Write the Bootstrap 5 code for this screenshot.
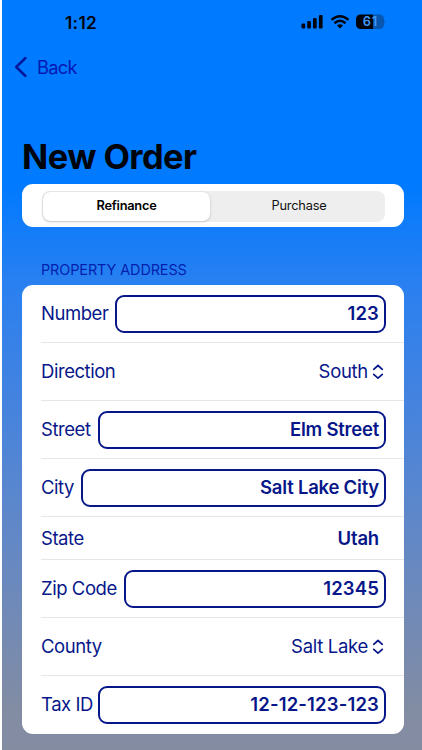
<!DOCTYPE html>
<html lang="en">
<head>
<meta charset="utf-8">
<meta name="viewport" content="width=device-width, initial-scale=1">
<title>New Order</title>
<link href="https://cdn.jsdelivr.net/npm/bootstrap@5.3.0/dist/css/bootstrap.min.css" rel="stylesheet">
<style>
:root { --navy: #07178a; }
html, body { height: 750px; overflow: hidden; }
body { font-family: Inter, "Liberation Sans", sans-serif; background: #fff; line-height: 1; }
.screen { height: 750px; margin-left: 2px; padding: 0 18px 0 20px;
  background: linear-gradient(180deg, #007aff 0, #007aff 185px, #2a80f0 285px, #4483df 400px, #5d87cb 510px, #728ab6 620px, #828ca3 710px, #848ca2 750px); }
.statusbar { height: 45px; padding: 0 18px 0 43px; color: #00040c; }
.clock { font-size: 17.3px; font-weight: 600; letter-spacing: .3px; }
.backlink { height: 44px; margin-left: -8px; font-size: 18.3px; letter-spacing: -.7px; color: #0419b4; }
.backtext { margin-left: 9px; }
.bigtitle { height: 95px; padding-top: 50px; margin: 0; font-size: 34.4px; font-weight: 700; letter-spacing: -.55px; line-height: 35px; color: #00040c; white-space: nowrap; }
.panel { background: #fff; border-radius: 11px; }
.pick { height: 43px; padding: 7px 19px 5px 20px; }
.track { background: #eeeeef; border-radius: 8px; font-size: 12.8px; letter-spacing: -.2px; color: #111; }
.seg-on { width: 167px; background: #fff; border-radius: 7px; margin: 1px; box-shadow: 0 1px 3px rgba(0,0,0,.16), 0 0 1px rgba(0,0,0,.16); font-weight: 600; letter-spacing: -.25px; color: #000; }
.seg-off { padding-left: 2px; }
.caption-line { height: 58px; padding: 36px 0 0 19px; font-size: 14.4px; letter-spacing: -.08px; line-height: 14px; color: #041fae; }
.fields { color: var(--navy); font-size: 18.5px; padding-left: 19px; overflow: hidden; }
.field { height: 58px; padding-right: 18px; border-bottom: 1px solid #e6e6e9; letter-spacing: -.45px; white-space: nowrap; }
.field:last-child { border-bottom-color: transparent; }
.field.short { height: 43px; padding-right: 25px; }
.lbl { flex: none; }
.entry { height: 38px; border: 2px solid var(--navy); border-radius: 9px; padding: 0 5px; font-weight: 600; letter-spacing: -.22px; }
.digits { letter-spacing: .15px; }
.w-number { width: 271px; } .w-street { width: 288px; } .w-city { width: 305px; } .w-zip { width: 262px; }
.val { font-weight: 600; letter-spacing: -.2px; }
.chooser { padding-right: 2px; letter-spacing: -.3px; }
</style>
<script src="https://cdn.jsdelivr.net/npm/bootstrap@5.3.0/dist/js/bootstrap.bundle.min.js"></script>
</head>
<body>
<main class="screen">
  <div class="statusbar d-flex align-items-center justify-content-between">
    <span class="clock">1:12</span>
    <svg width="86" height="18" viewBox="0 0 86 18" fill="#00040c">
      <rect x="1.500" y="9.500" width="3.700" height="5" rx="1"/><rect x="7.200" y="7" width="3.700" height="7.500" rx="1"/><rect x="13" y="4" width="3.700" height="10.500" rx="1"/><rect x="18.900" y="1" width="3.700" height="13.500" rx="1"/>
      <g fill="none" stroke="#00040c" stroke-width="2.500"><path d="M31.500 5.900Q40-1.500 48.500 5.900"/><path d="M34.500 9.200Q40 4.400 45.500 9.200"/></g>
      <path d="M37 11.400Q40 9 43 11.400L40 14.400Z"/>
      <path d="M60.500 .5H73V15H60.500a4.500 4.500 0 0 1-4.500-4.500V5A4.500 4.500 0 0 1 60.500 .5Z"/>
      <path d="M73 .5h6.500A4.500 4.500 0 0 1 84 5V10.500a4.500 4.500 0 0 1-4.500 4.500H73Z" fill="#0756b0"/><path d="M84.700 5.500q1.500 2.200 0 4.400Z" fill="#0756b0"/>
      <text x="62.700" y="12.400" font-size="12.800" font-weight="600" fill="#3e98f4" textLength="14.500">61</text>
    </svg>
  </div>
  <div class="backlink d-flex align-items-center">
    <svg width="14" height="22" viewBox="0 0 14 22" fill="none" stroke="#06189c" stroke-width="2.500" stroke-linecap="round" stroke-linejoin="round"><path d="M11.500 2L2.200 11L11.500 20"/></svg>
    <span class="backtext">Back</span>
  </div>
  <h1 class="bigtitle">New Order</h1>
  <div class="panel pick d-flex">
    <div class="track d-flex flex-fill">
      <div class="seg-on d-flex align-items-center justify-content-center">Refinance</div>
      <div class="seg-off flex-fill d-flex align-items-center justify-content-center">Purchase</div>
    </div>
  </div>
  <div class="caption-line">PROPERTY ADDRESS</div>
  <div class="panel fields">
    <div class="field d-flex align-items-center justify-content-between"><span class="lbl">Number</span><div class="entry digits w-number d-flex align-items-center justify-content-end">123</div></div>
    <div class="field d-flex align-items-center justify-content-between"><span class="lbl">Direction</span><div class="chooser d-flex align-items-center"><span>South</span><svg class="ms-1" width="12" height="16" viewBox="0 0 12 16" fill="none" stroke="#07178a" stroke-width="1.700" stroke-linecap="round" stroke-linejoin="round"><path d="M1.700 5.300L6 1.500L10.300 5.300M1.700 10.300L6 14.100L10.300 10.300"/></svg></div></div>
    <div class="field d-flex align-items-center justify-content-between"><span class="lbl">Street</span><div class="entry w-street d-flex align-items-center justify-content-end">Elm Street</div></div>
    <div class="field d-flex align-items-center justify-content-between"><span class="lbl">City</span><div class="entry w-city d-flex align-items-center justify-content-end">Salt Lake City</div></div>
    <div class="field short d-flex align-items-center justify-content-between"><span class="lbl">State</span><span class="val">Utah</span></div>
    <div class="field d-flex align-items-center justify-content-between"><span class="lbl">Zip Code</span><div class="entry digits w-zip d-flex align-items-center justify-content-end">12345</div></div>
    <div class="field d-flex align-items-center justify-content-between"><span class="lbl">County</span><div class="chooser d-flex align-items-center"><span>Salt Lake</span><svg class="ms-1" width="12" height="16" viewBox="0 0 12 16" fill="none" stroke="#07178a" stroke-width="1.700" stroke-linecap="round" stroke-linejoin="round"><path d="M1.700 5.300L6 1.500L10.300 5.300M1.700 10.300L6 14.100L10.300 10.300"/></svg></div></div>
    <div class="field d-flex align-items-center justify-content-between"><span class="lbl">Tax ID</span><div class="entry digits w-street d-flex align-items-center justify-content-end">12-12-123-123</div></div>
  </div>
</main>
</body>
</html>
